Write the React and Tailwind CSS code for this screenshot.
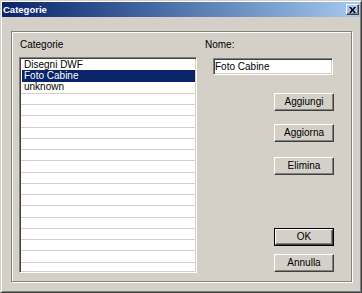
import React from 'react';

const items = ['Disegni DWF', 'Foto Cabine', 'unknown'];
const rows = Array.from({ length: 19 }, (_, i) => items[i] ?? null);

const Bevel = ({ children }) => (
  <div className="flex h-full w-full items-center justify-center border border-t-white border-l-white border-r-[#404040] border-b-[#404040] shadow-[inset_-1px_-1px_0_#808080]">
    {children}
  </div>
);

const Button = ({ children, isDefault, className = '' }) => (
  <div className={`h-[18px] w-[60px] ${isDefault ? 'border border-black' : ''} ${className}`}>
    <Bevel>{children}</Bevel>
  </div>
);

const sunken =
  'border border-t-[#808080] border-l-[#808080] border-r-white border-b-white shadow-[inset_1px_1px_0_#404040,inset_-1px_-1px_0_#d4d0c8] bg-white p-[1px]';

export default function App() {
  return (
    <div
      className="h-[293px] w-[362px] overflow-hidden border border-t-[#d4d0c8] border-l-[#d4d0c8] border-r-[#404040] border-b-[#404040] bg-[#d4d0c8] p-[1px] text-[10px] leading-[12px] text-black shadow-[inset_1px_1px_0_#fff,inset_-1px_-1px_0_#808080]"
      style={{ fontFamily: '"Liberation Sans", Arial, sans-serif' }}
    >
      {/* title bar */}
      <div className="flex h-[15px] items-center justify-between bg-gradient-to-r from-[#0a246a] to-[#a6caf0] pl-[1px] pr-[1px]">
        <span className="text-[9.5px] font-bold text-white">Categorie</span>
        <div className="h-[11px] w-[13px]">
          <Bevel>
            <svg width="7" height="6" viewBox="0 0 7 6">
              <path d="M0 0h2l1.5 2L5 0h2L4.5 3 7 6H5L3.5 4 2 6H0l2.5-3z" fill="#000" />
            </svg>
          </Bevel>
        </div>
      </div>

      {/* group frame */}
      <div className="ml-[9px] mt-[14px] flex h-[251px] w-[341px] border border-[#808080] shadow-[inset_1px_1px_0_#fff,1px_1px_0_#fff]">
        <div className="ml-[7px] mt-[7px] flex flex-col">
          <span className="ml-[1px]">Categorie</span>
          <div className={`mt-[6px] h-[216px] w-[178px] overflow-hidden ${sunken}`}>
            {rows.map((r, i) => (
              <div
                key={i}
                className={`h-[11.25px] ${i >= 3 ? 'border-t border-[#d4d0c8]' : ''}`}
              >
                {r && (
                  <div
                    className={`ml-[1px] flex h-full items-center pl-[2px] ${
                      i === 1 ? 'bg-[#0a246a] text-white' : ''
                    }`}
                  >
                    {r}
                  </div>
                )}
              </div>
            ))}
          </div>
        </div>

        <div className="ml-[8px] mt-[7px] flex flex-col">
          <span>Nome:</span>
          <div className={`ml-[8px] mt-[7px] flex h-[17px] w-[120px] items-center pl-[1px] ${sunken}`}>
            Foto Cabine
          </div>
          <Button className="ml-[69px] mt-[18px]">Aggiungi</Button>
          <Button className="ml-[69px] mt-[13px]">Aggiorna</Button>
          <Button className="ml-[69px] mt-[15px]">Elimina</Button>
          <Button isDefault className="ml-[69px] mt-[53px]">OK</Button>
          <Button className="ml-[69px] mt-[8px]">Annulla</Button>
        </div>
      </div>
    </div>
  );
}
